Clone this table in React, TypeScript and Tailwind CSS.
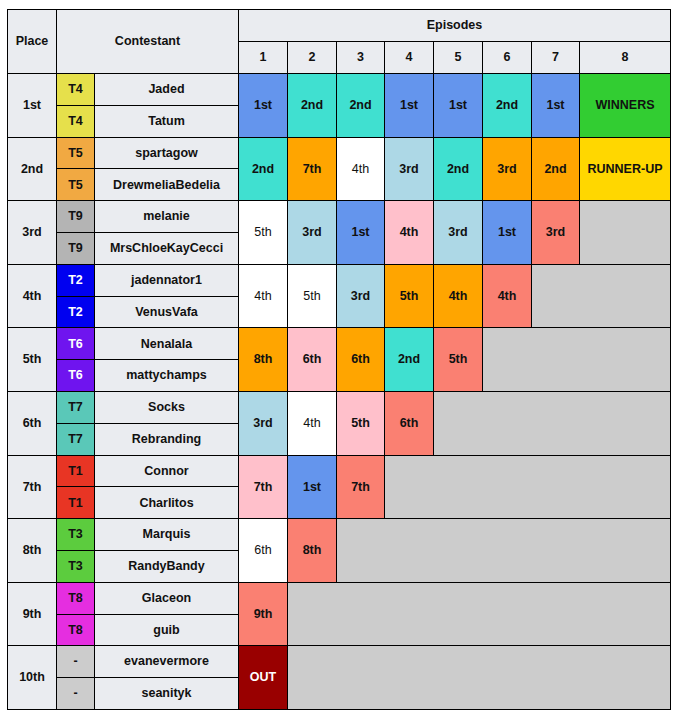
import React from "react";

type Cell = { t: string; c: string; w?: boolean; white?: boolean; span?: number };

const C = {
  blue: "bg-[#6495ed]",
  turq: "bg-[#40e0d0]",
  orange: "bg-[#ffa500]",
  lblue: "bg-[#add8e6]",
  pink: "bg-[#ffc0cb]",
  salmon: "bg-[#fa8072]",
  white: "bg-white",
  green: "bg-[#32cd32]",
  gold: "bg-[#ffd700]",
  out: "bg-[#990000]",
};

const spanCls: Record<number, string> = {
  1: "col-span-1",
  2: "col-span-2",
  3: "col-span-3",
  4: "col-span-4",
  5: "col-span-5",
  6: "col-span-6",
  7: "col-span-7",
};

type Group = {
  place: string;
  team: string;
  teamBg: string;
  teamWhite?: boolean;
  names: [string, string];
  eps: Cell[];
  gray: number;
};

const e = (t: string, c: string, extra: Partial<Cell> = {}): Cell => ({ t, c, ...extra });

const groups: Group[] = [
  {
    place: "1st",
    team: "T4",
    teamBg: "bg-[#e6e04b]",
    names: ["Jaded", "Tatum"],
    eps: [
      e("1st", C.blue),
      e("2nd", C.turq),
      e("2nd", C.turq),
      e("1st", C.blue),
      e("1st", C.blue),
      e("2nd", C.turq),
      e("1st", C.blue),
      e("WINNERS", C.green),
    ],
    gray: 0,
  },
  {
    place: "2nd",
    team: "T5",
    teamBg: "bg-[#f1a942]",
    names: ["spartagow", "DrewmeliaBedelia"],
    eps: [
      e("2nd", C.turq),
      e("7th", C.orange),
      e("4th", C.white, { w: true }),
      e("3rd", C.lblue),
      e("2nd", C.turq),
      e("3rd", C.orange),
      e("2nd", C.orange),
      e("RUNNER-UP", C.gold),
    ],
    gray: 0,
  },
  {
    place: "3rd",
    team: "T9",
    teamBg: "bg-[#b4b4b4]",
    names: ["melanie", "MrsChloeKayCecci"],
    eps: [
      e("5th", C.white, { w: true }),
      e("3rd", C.lblue),
      e("1st", C.blue),
      e("4th", C.pink),
      e("3rd", C.lblue),
      e("1st", C.blue),
      e("3rd", C.salmon),
    ],
    gray: 1,
  },
  {
    place: "4th",
    team: "T2",
    teamBg: "bg-[#0000f0]",
    teamWhite: true,
    names: ["jadennator1", "VenusVafa"],
    eps: [
      e("4th", C.white, { w: true }),
      e("5th", C.white, { w: true }),
      e("3rd", C.lblue),
      e("5th", C.orange),
      e("4th", C.orange),
      e("4th", C.salmon),
    ],
    gray: 2,
  },
  {
    place: "5th",
    team: "T6",
    teamBg: "bg-[#6f14ef]",
    teamWhite: true,
    names: ["Nenalala", "mattychamps"],
    eps: [
      e("8th", C.orange),
      e("6th", C.pink),
      e("6th", C.orange),
      e("2nd", C.turq),
      e("5th", C.salmon),
    ],
    gray: 3,
  },
  {
    place: "6th",
    team: "T7",
    teamBg: "bg-[#5ac8b8]",
    names: ["Socks", "Rebranding"],
    eps: [
      e("3rd", C.lblue),
      e("4th", C.white, { w: true }),
      e("5th", C.pink),
      e("6th", C.salmon),
    ],
    gray: 4,
  },
  {
    place: "7th",
    team: "T1",
    teamBg: "bg-[#e83524]",
    names: ["Connor", "Charlitos"],
    eps: [e("7th", C.pink), e("1st", C.blue), e("7th", C.salmon)],
    gray: 5,
  },
  {
    place: "8th",
    team: "T3",
    teamBg: "bg-[#5ccc3e]",
    names: ["Marquis", "RandyBandy"],
    eps: [e("6th", C.white, { w: true }), e("8th", C.salmon)],
    gray: 6,
  },
  {
    place: "9th",
    team: "T8",
    teamBg: "bg-[#e52ee0]",
    names: ["Glaceon", "guib"],
    eps: [e("9th", C.salmon)],
    gray: 7,
  },
  {
    place: "10th",
    team: "-",
    teamBg: "bg-[#cccccc]",
    names: ["evanevermore", "seanityk"],
    eps: [e("OUT", C.out, { white: true })],
    gray: 7,
  },
];

const base = "flex items-center justify-center text-center";
const hdr = "bg-[#eaecf0]";

export default function App() {
  return (
    <div className="bg-white min-h-[720px] pt-[9px] pl-[7px]" style={{ fontFamily: '"Liberation Sans", Arial, sans-serif' }}>
      <div className="inline-grid bg-black p-px gap-px grid-cols-[48px_37px_143px_48px_48px_47px_48px_48px_48px_47px_90px] grid-rows-[31px_31px_repeat(20,30.8px)] text-[12.5px] font-bold text-[#111] leading-none">
        <div className={`${base} ${hdr} col-start-1 row-span-2`}>Place</div>
        <div className={`${base} ${hdr} col-span-2 row-span-2`}>Contestant</div>
        <div className={`${base} ${hdr} col-span-8`}>Episodes</div>
        {[1, 2, 3, 4, 5, 6, 7, 8].map((n) => (
          <div key={n} className={`${base} ${hdr}`}>
            {n}
          </div>
        ))}
        {groups.map((g) => (
          <React.Fragment key={g.place}>
            <div className={`${base} ${hdr} col-start-1 row-span-2`}>{g.place}</div>
            <div className={`${base} ${g.teamBg} ${g.teamWhite ? "text-white" : ""}`}>{g.team}</div>
            <div className={`${base} ${hdr}`}>{g.names[0]}</div>
            {g.eps.map((c, i) => (
              <div
                key={i}
                className={`${base} ${c.c} row-span-2 ${c.w ? "font-normal" : ""} ${c.white ? "text-white" : ""}`}
              >
                {c.t}
              </div>
            ))}
            {g.gray > 0 && <div className={`${spanCls[g.gray]} row-span-2 bg-[#cccccc]`} />}
            <div className={`${base} ${g.teamBg} col-start-2 ${g.teamWhite ? "text-white" : ""}`}>{g.team}</div>
            <div className={`${base} ${hdr}`}>{g.names[1]}</div>
          </React.Fragment>
        ))}
      </div>
    </div>
  );
}
